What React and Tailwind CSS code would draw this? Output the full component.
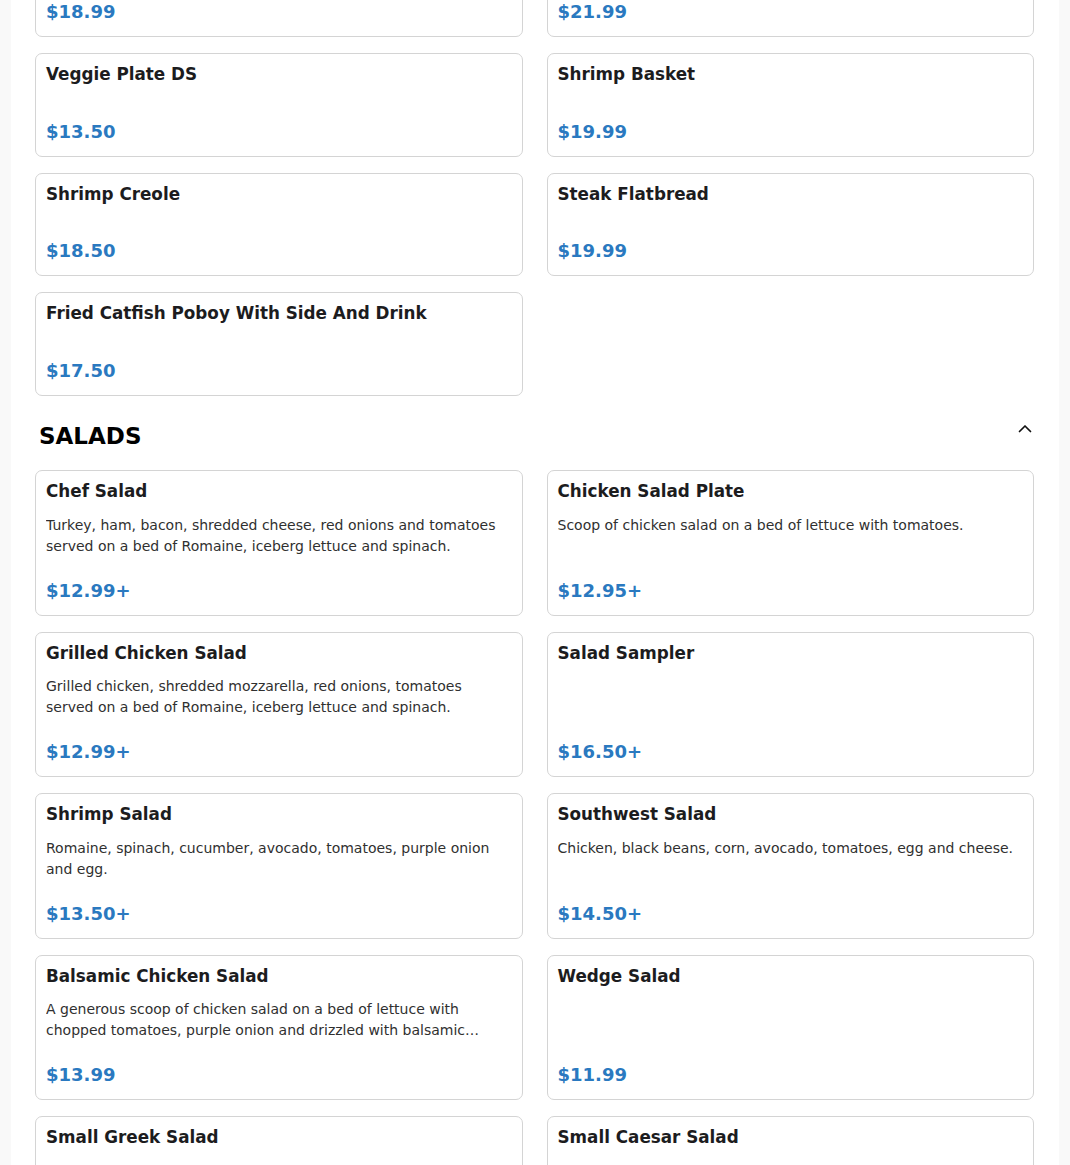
import React from "react";

const font = { fontFamily: '"DejaVu Sans", Verdana, sans-serif' };

function Card({ name, desc, price }) {
  return (
    <div className="flex flex-col rounded-[7px] border border-[#d4d4d4] bg-white px-[10px] pt-[11px] pb-[10px]">
      <div className="text-[16.8px] font-bold leading-[19.5px] text-[#1c1c1e]">{name}</div>
      <div className="mt-[13px] line-clamp-2 text-[14px] leading-[21px] text-[#303030]">{desc}</div>
      <div className="mt-auto pt-[20px] text-[18px] font-bold leading-[28px] text-[#2a79c0]">{price}</div>
    </div>
  );
}

const top = [
  { name: "Seafood Platter", price: "$18.99" },
  { name: "Seafood Basket", price: "$21.99" },
  { name: "Veggie Plate DS", price: "$13.50" },
  { name: "Shrimp Basket", price: "$19.99" },
  { name: "Shrimp Creole", price: "$18.50" },
  { name: "Steak Flatbread", price: "$19.99" },
  { name: "Fried Catfish Poboy With Side And Drink", price: "$17.50" },
];

const salads = [
  { name: "Chef Salad", desc: "Turkey, ham, bacon, shredded cheese, red onions and tomatoes served on a bed of Romaine, iceberg lettuce and spinach.", price: "$12.99+" },
  { name: "Chicken Salad Plate", desc: "Scoop of chicken salad on a bed of lettuce with tomatoes.", price: "$12.95+" },
  { name: "Grilled Chicken Salad", desc: "Grilled chicken, shredded mozzarella, red onions, tomatoes served on a bed of Romaine, iceberg lettuce and spinach.", price: "$12.99+" },
  { name: "Salad Sampler", desc: "", price: "$16.50+" },
  { name: "Shrimp Salad", desc: "Romaine, spinach, cucumber, avocado, tomatoes, purple onion and egg.", price: "$13.50+" },
  { name: "Southwest Salad", desc: "Chicken, black beans, corn, avocado, tomatoes, egg and cheese.", price: "$14.50+" },
  { name: "Balsamic Chicken Salad", desc: "A generous scoop of chicken salad on a bed of lettuce with chopped tomatoes, purple onion and drizzled with balsamic vinaigrette dressing.", price: "$13.99" },
  { name: "Wedge Salad", desc: "", price: "$11.99" },
  { name: "Small Greek Salad", desc: "Romaine, feta, olives, cucumber, tomatoes and red onion.", price: "$8.99" },
  { name: "Small Caesar Salad", desc: "Romaine, parmesan and croutons with Caesar dressing.", price: "$8.99" },
];

export default function App() {
  return (
    <div className="h-[1165px] overflow-hidden bg-[#f9f9f9]" style={font}>
      <div className="mx-[11px] min-h-full bg-white pl-6 pr-[25px]">
        <div className="-mt-[66.5px] grid grid-cols-2 gap-x-6 gap-y-4">
          {top.map((it) => (
            <Card key={it.name} {...it} />
          ))}
        </div>
        <div className="flex items-center justify-between pl-1 pr-[1px] pt-[25.5px] pb-[19px]">
          <h2 className="text-[23px] font-bold leading-[30px] text-black">SALADS</h2>
          <svg width="16" height="16" viewBox="0 0 16 16" fill="none" className="-mt-[14px]">
            <path d="M2.5 10.5L8 5l5.5 5.5" stroke="#111" strokeWidth="1.7" strokeLinecap="round" strokeLinejoin="round" />
          </svg>
        </div>
        <div className="grid grid-cols-2 gap-x-6 gap-y-4">
          {salads.map((it) => (
            <Card key={it.name} {...it} />
          ))}
        </div>
      </div>
    </div>
  );
}
